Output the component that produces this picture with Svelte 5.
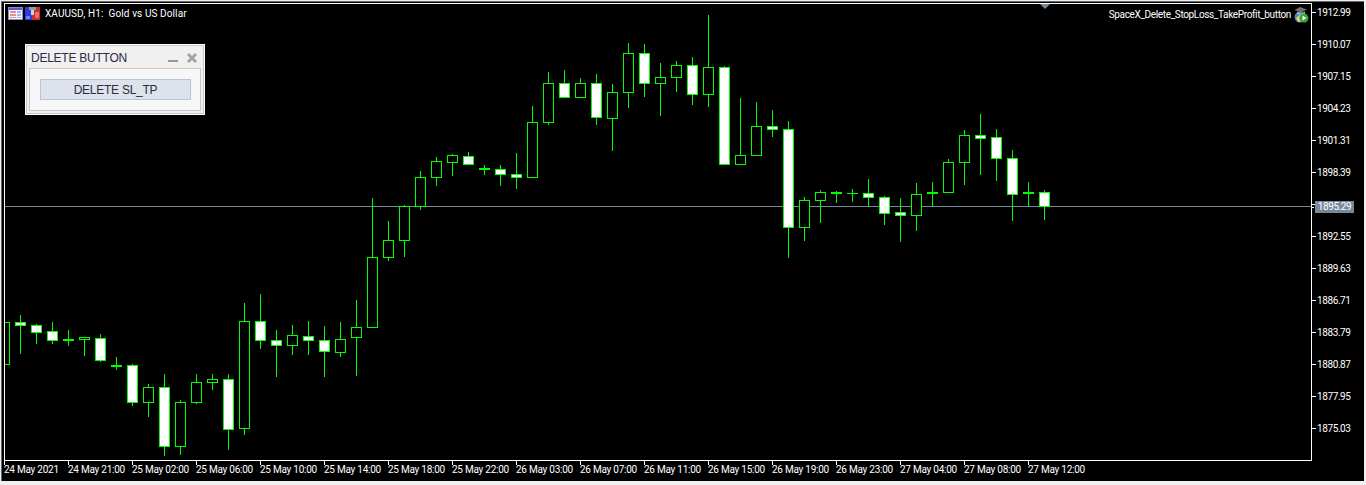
<script>
    // x, high, low, body top, body bottom, filled
    const candles = [
        [4,322,366,322,364,0],[20,315,353,322,325,1],[36,324,343,325,332,1],[52,322,343,331,340,1],
        [68,330,345,339,340,1],[84,337,355,337,339,0],[100,334,361,338,360,1],[116,357,369,365,366,1],
        [132,364,405,365,402,1],[148,384,416,387,402,0],[164,374,455,387,446,1],[180,400,454,402,446,0],
        [196,374,403,382,402,0],[212,374,389,379,382,0],[228,374,449,379,429,1],[244,303,434,321,428,0],
        [260,294,348,321,340,1],[276,330,376,340,345,1],[292,325,354,335,345,0],[308,321,354,336,340,1],
        [324,326,376,340,351,1],[340,322,356,339,352,0],[356,300,375,327,337,0],[372,198,327,257,327,0],
        [388,221,260,240,257,0],[404,205,256,206,240,0],[420,171,209,177,206,0],[436,157,185,161,177,0],
        [452,154,175,155,162,0],[468,152,164,156,164,1],[484,165,174,168,169,1],[500,165,185,169,174,1],
        [516,153,188,174,177,1],[532,106,177,122,177,0],[548,72,124,83,122,0],[564,70,97,83,97,1],
        [580,78,97,83,97,0],[596,74,124,83,117,1],[612,84,150,92,118,0],[628,43,107,53,92,0],
        [644,44,96,53,83,1],[660,63,115,77,83,0],[676,61,91,65,77,0],[692,57,104,65,94,1],
        [708,15,106,67,94,0],[724,66,164,67,164,1],[740,98,164,155,164,0],[756,102,155,126,155,0],
        [772,110,136,126,129,1],[788,121,257,129,227,1],[804,197,240,200,227,0],[820,190,222,192,200,0],
        [836,191,202,192,193,1],[852,189,201,193,193,1],[868,179,206,193,197,1],[884,196,224,197,213,1],
        [900,198,241,212,215,1],[916,183,230,194,215,0],[932,182,206,192,193,1],[948,159,192,162,192,0],
        [964,130,184,135,162,0],[980,114,174,135,138,1],[996,129,180,137,158,1],[1012,150,220,158,194,1],
        [1028,182,206,192,193,1],[1044,190,219,192,206,1]
    ];
    const prices = ['1912.99','1910.07','1907.15','1904.23','1901.31','1898.39','','1892.55','1889.63','1886.71','1883.79','1880.87','1877.95','1875.03'];
    const times = ['24 May 2021','24 May 21:00','25 May 02:00','25 May 06:00','25 May 10:00','25 May 14:00','25 May 18:00','25 May 22:00','26 May 03:00','26 May 07:00','26 May 11:00','26 May 15:00','26 May 19:00','26 May 23:00','27 May 04:00','27 May 08:00','27 May 12:00'];
</script>

<div class="terminal">
    <div class="window">
        <div class="top-row">
            <div class="chart">
                <svg class="plot" viewBox="5 4 1306 456" width="1306" height="456" shape-rendering="crispEdges">
                    <rect x="5" y="206" width="1306" height="1" fill="#778899" />
                    {#each candles as [x, high, low, top, bottom, filled]}
                        <rect x={x} y={high} width="1" height={low - high + 1} fill="#00ff00" />
                        <rect x={x - 5} y={top} width="11" height={bottom - top + 1} fill="#00ff00" />
                        {#if bottom - top > 1}
                            <rect x={x - 4} y={top + 1} width="9" height={bottom - top - 1} fill={filled ? '#ffffff' : '#000000'} />
                        {/if}
                    {/each}
                </svg>

                <div class="chart-head">
                    <div class="symbol">
                        <svg width="15" height="13" viewBox="0 0 15 13" shape-rendering="crispEdges">
                            <rect width="15" height="13" fill="#8c8cc8" />
                            <rect x="1" y="1" width="13" height="11" fill="#f4f4fc" />
                            <rect x="1" y="1" width="13" height="2" fill="#5858d8" />
                            <rect x="2" y="4" width="6" height="2" fill="#e89090" />
                            <rect x="2" y="7" width="6" height="2" fill="#e89090" />
                            <rect x="2" y="10" width="6" height="1" fill="#e89090" />
                            <rect x="9" y="4" width="4" height="2" fill="#b0b0e8" />
                            <rect x="9" y="7" width="4" height="2" fill="#b0b0e8" />
                            <rect x="9" y="10" width="4" height="1" fill="#b0b0e8" />
                        </svg>
                        <svg width="15" height="13" viewBox="0 0 15 13" shape-rendering="crispEdges">
                            <rect width="7" height="13" fill="#2c3cd8" />
                            <rect x="7" width="8" height="13" fill="#c83030" />
                            <rect x="4" y="0" width="7" height="3" fill="#9a9aa4" />
                            <rect x="6" y="3" width="3" height="5" fill="#d0d0d8" />
                            <rect x="1" y="9" width="4" height="3" fill="#7080f0" />
                            <rect x="10" y="5" width="4" height="6" fill="#e87070" />
                        </svg>
                        <span class="symbol-name">XAUUSD, H1:&nbsp; Gold vs US Dollar</span>
                    </div>
                    <div class="expert">
                        <span class="expert-name">SpaceX_Delete_StopLoss_TakeProfit_button</span>
                        <svg width="16" height="17" viewBox="0 0 16 17">
                            <circle cx="7" cy="11" r="5.5" fill="#3c8ad8" />
                            <path d="M3 12 L8 8 L9 15 L5 16Z" fill="#e8d060" />
                            <path d="M7 1 L14 3.5 L8 6.5 L1.5 4Z" fill="#707070" />
                            <path d="M4 5.5 L8 7.5 L12 5.5 V8 L8 9.5 L4 8Z" fill="#a8a8a8" />
                            <circle cx="11" cy="12" r="4.5" fill="#30a830" />
                            <path d="M9.5 9.5 L13.5 12 L9.5 14.5Z" fill="#ffffff" />
                        </svg>
                    </div>
                </div>

                <div class="shift"></div>

                <div class="panel">
                    <div class="panel-title">
                        <span>DELETE BUTTON</span>
                        <div class="panel-icons">
                            <svg width="10" height="10" viewBox="0 0 10 10" shape-rendering="crispEdges"><rect y="7" width="10" height="2" fill="#989898" /></svg>
                            <svg width="10" height="10" viewBox="0 0 10 10"><path d="M1 1 L9 9 M9 1 L1 9" stroke="#a0a0a0" stroke-width="2.6" /></svg>
                        </div>
                    </div>
                    <div class="panel-body">
                        <button class="delete">DELETE SL_TP</button>
                    </div>
                </div>
            </div>

            <div class="price-axis">
                {#each prices as price}
                    <div class="price"><i></i>{price}</div>
                {/each}
                <div class="last-price"><i></i><b>1895.29</b></div>
            </div>
        </div>

        <div class="time-axis">
            {#each times as time}
                <div class="time"><span>{time}</span></div>
            {/each}
        </div>
    </div>
</div>

<style>
    :global(body) {
        background: #f0f0f0;
    }
    .terminal {
        width: 1366px;
        height: 485px;
        box-sizing: border-box;
        padding: 1px 2px 4px 1px;
        background: #f0f0f0;
        font-family: "Roboto", "Liberation Sans", sans-serif;
        font-size: 10px;
        color: #fff;
        overflow: hidden;
    }
    .window {
        height: 100%;
        box-sizing: border-box;
        background: #000;
        border-top: 1px solid #696969;
        border-left: 1px solid #696969;
        padding: 1px 0 0 2px;
    }
    .top-row {
        display: flex;
    }
    .chart {
        position: relative;
        width: 1306px;
        height: 456px;
        border: 1px solid #fff;
        overflow: hidden;
    }
    .plot {
        display: block;
    }
    .chart-head {
        position: absolute;
        top: 0;
        left: 0;
        right: 0;
        display: flex;
        justify-content: space-between;
        padding: 1px 2px 0 3px;
    }
    .symbol {
        display: flex;
        align-items: center;
        gap: 2px;
        height: 17px;
    }
    .symbol-name {
        margin-left: 3px;
        letter-spacing: 0.1px;
    }
    .expert {
        display: flex;
        align-items: center;
        gap: 2px;
        height: 18px;
    }
    .expert-name {
        letter-spacing: -0.35px;
    }
    .shift {
        position: absolute;
        top: 0;
        left: 1035px;
        width: 0;
        height: 0;
        border-left: 5px solid transparent;
        border-right: 5px solid transparent;
        border-top: 5px solid #778899;
    }
    .panel {
        position: absolute;
        top: 40px;
        left: 20px;
        width: 180px;
        height: 71px;
        box-sizing: border-box;
        background: #f0f0f0;
        border: 1px solid #fff;
        outline: 1px solid #c8c8c8;
        outline-offset: -2px;
        padding: 3px;
        display: flex;
        flex-direction: column;
        color: #2b2b44;
        font-family: "Liberation Sans", sans-serif;
        font-size: 12px;
    }
    .panel-title {
        height: 20px;
        display: flex;
        align-items: center;
        justify-content: space-between;
        padding: 0 4px 0 2px;
        letter-spacing: -0.25px;
    }
    .panel-icons {
        display: flex;
        gap: 9px;
    }
    .panel-body {
        flex: 1;
        background: #f7f7f7;
        border: 1px solid #c8c8c8;
        padding: 10px 9px 10px 10px;
    }
    .delete {
        display: block;
        width: 100%;
        height: 21px;
        padding: 0;
        background: #dde2eb;
        border: 1px solid #b4c8dc;
        color: #2b2b44;
        font: inherit;
        letter-spacing: -0.25px;
    }
    .price-axis {
        position: relative;
        flex: 1;
        display: flex;
        flex-direction: column;
        gap: 19px;
        padding-top: 3px;
    }
    .price {
        display: flex;
        align-items: center;
        height: 13px;
        gap: 1px;
        letter-spacing: -0.4px;
    }
    .price i, .last-price i {
        display: block;
        width: 4px;
        height: 1px;
        background: #fff;
    }
    .last-price {
        position: absolute;
        top: 198px;
        left: 0;
        display: flex;
        align-items: center;
    }
    .last-price i {
        width: 2px;
    }
    .last-price b {
        width: 39px;
        margin-left: 1px;
        height: 12px;
        line-height: 12px;
        background: #778899;
        font-weight: normal;
        text-align: center;
        letter-spacing: -0.4px;
    }
    .time-axis {
        display: flex;
    }
    .time {
        width: 64px;
        flex: none;
        box-sizing: border-box;
        border-left: 1px solid #fff;
        height: 4px;
        line-height: 18px;
        white-space: nowrap;
        letter-spacing: -0.25px;
    }
    .time span {
        margin-left: -1px;
    }
</style>
